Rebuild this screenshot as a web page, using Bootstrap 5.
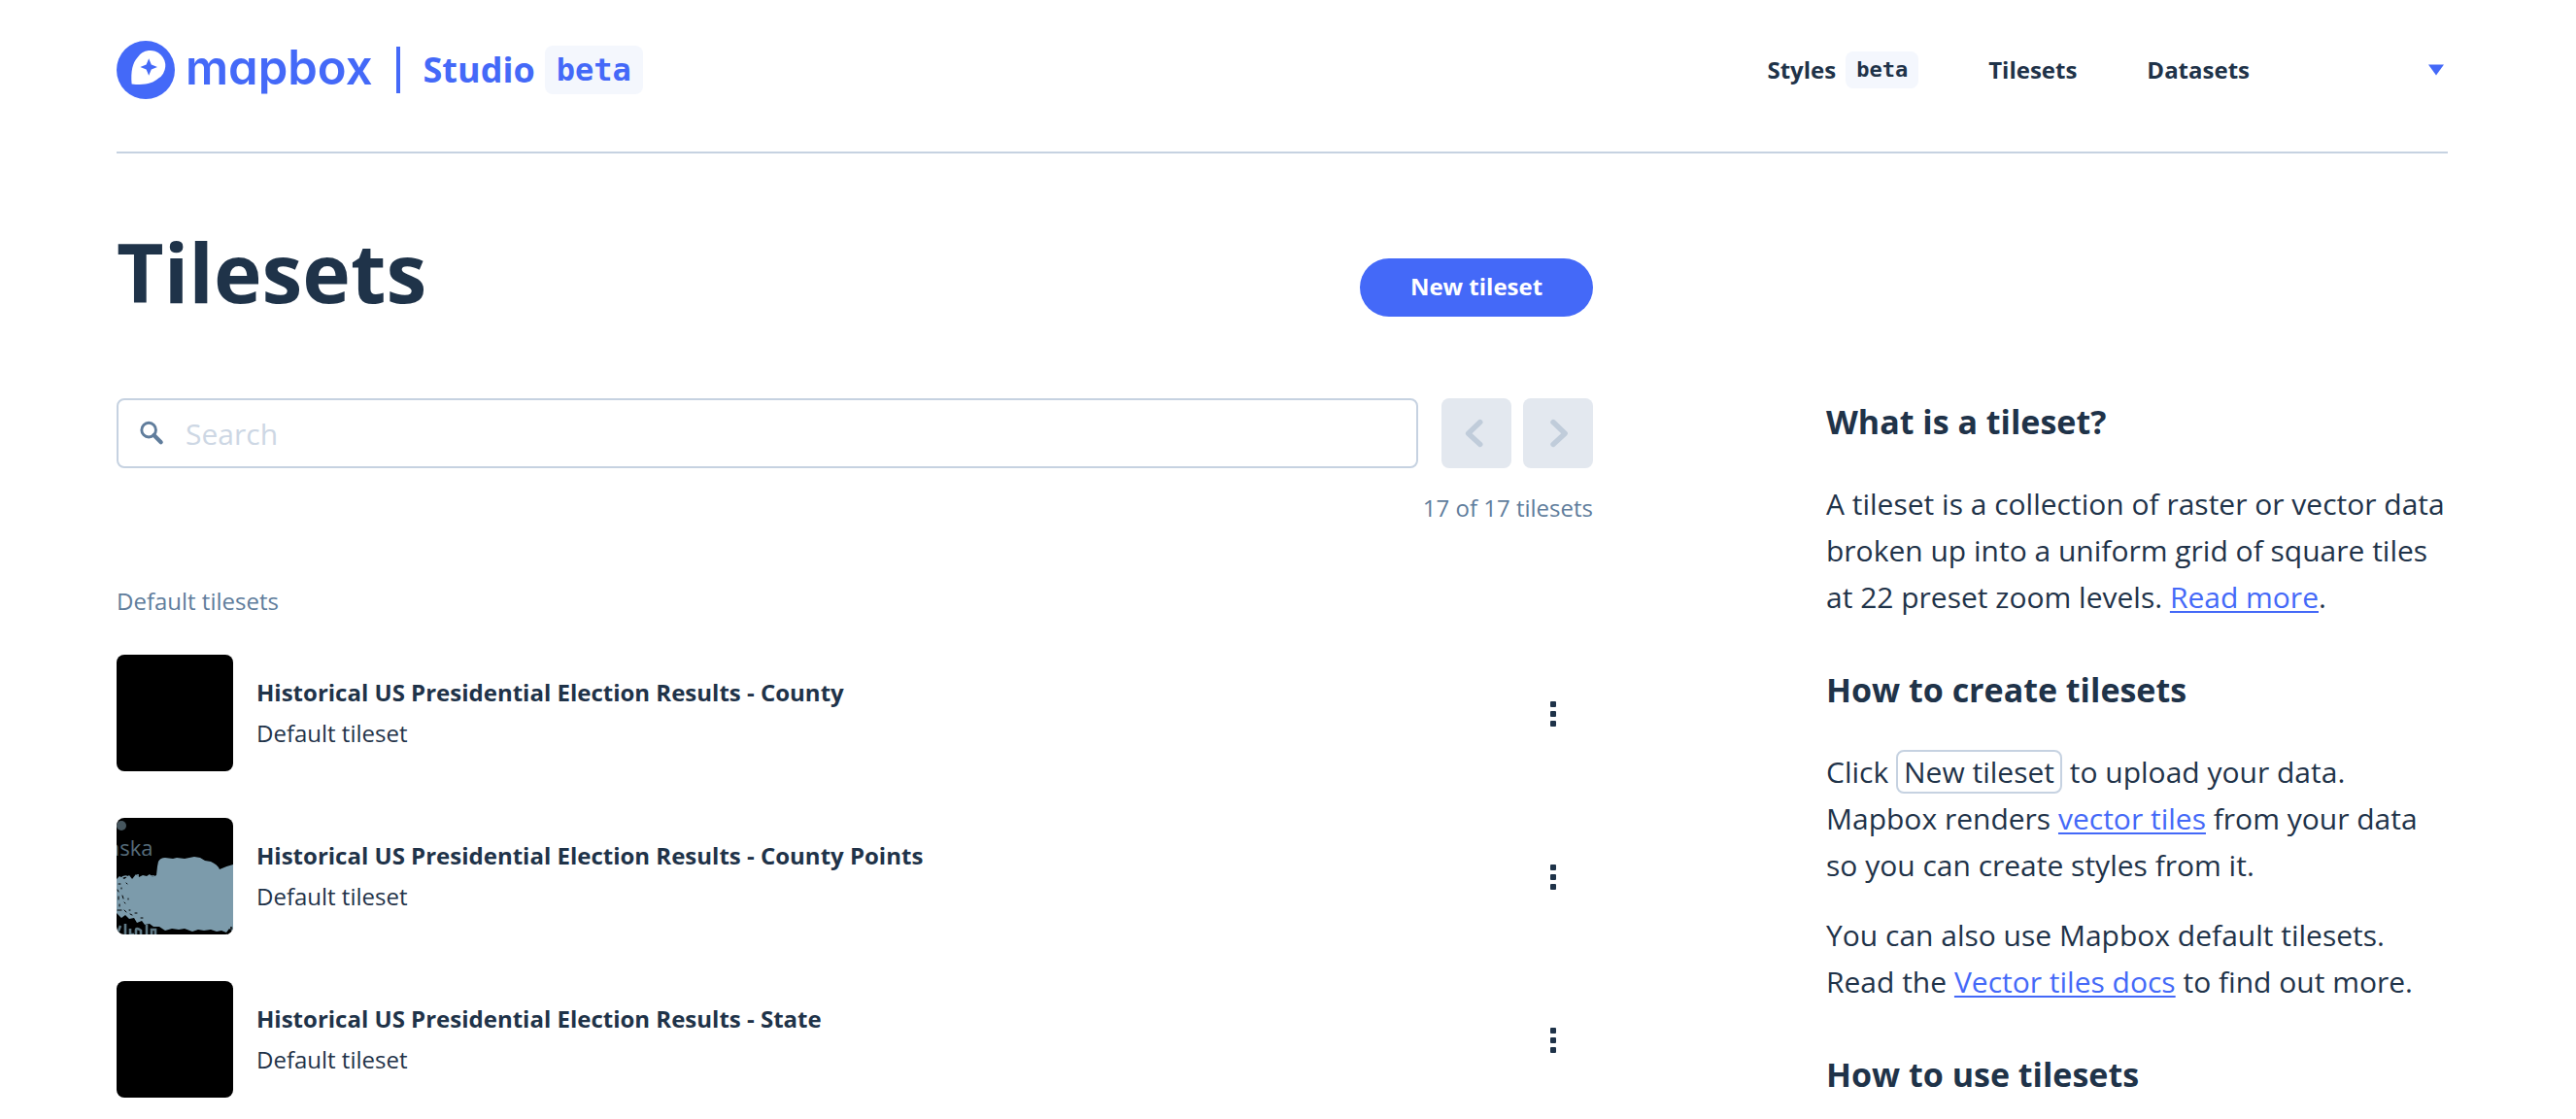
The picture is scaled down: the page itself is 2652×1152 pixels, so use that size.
<!DOCTYPE html>
<html lang="en">
<head>
<meta charset="utf-8">
<meta name="viewport" content="width=device-width, initial-scale=1">
<title>Tilesets | Mapbox Studio</title>
<link href="https://cdn.jsdelivr.net/npm/bootstrap@5.3.0/dist/css/bootstrap.min.css" rel="stylesheet">
<style>
  :root { --ink: #1f3349; --blue: #4469f8; --line: #c6d2e1; --muted: #607d9c; --tint: #f4f7fd; }
  body { font: 400 24px/36px "Open Sans", "Noto Sans", sans-serif; color: var(--ink); background: #fff; }
  a { color: inherit; text-decoration: none; }
  .page-wrap { padding: 0 132px 0 120px; }
  .site-head { height: 158px; border-bottom: 2px solid var(--line); padding-bottom: 12px; }
  .brand-link { color: var(--blue); }
  .wordmark { font: 600 49px/60px Inter, sans-serif; font-feature-settings: "cv11"; margin-left: 11px; padding-bottom: 4px; }
  .brand-rule { width: 4px; height: 48px; background: var(--blue); margin: 0 24px; }
  .product { font-size: 36px; line-height: 50px; font-weight: 700; }
  .beta-tag { font: 700 32px/50px "DejaVu Sans Mono", monospace; background: var(--tint); border-radius: 8px; padding: 0 12px; margin-left: 10px; }
  .site-nav { gap: 72px; font-weight: 700; }
  .site-nav .beta-tag { font-size: 22px; line-height: 38px; padding: 0 11px; }
  .menu-toggle { border: 0; background: none; padding: 0 4px 0 112px; line-height: 0; }
  .main-col { flex: 1 1 0; min-width: 0; }
  .side-col { width: 26.6667%; font-size: 30px; line-height: 48px; padding-top: 252px; }
  .columns { gap: 240px; }
  .page-title { font-size: 84px; line-height: 96px; font-weight: 700; margin: 0; }
  .title-bar { padding: 74px 0 82px; }
  .new-btn { width: 240px; height: 60px; border-radius: 30px; background: var(--blue); color: #fff; font-size: 24px; font-weight: 700; border: 0; padding: 0 0 2px; margin-top: 34px; }
  .search-box { border: 2px solid var(--line); border-radius: 8px; height: 72px; padding: 0 22px; gap: 22px; }
  .search-box input { border: 0; outline: 0; background: none; padding: 2px 0 0; width: 100%; font-size: 30px; line-height: 48px; color: var(--ink); }
  .search-box input::placeholder { color: #cdd7e4; opacity: 1; }
  .pager { gap: 12px; }
  .page-btn { width: 72px; height: 72px; border: 0; border-radius: 8px; background: #e3e8ef; padding: 0; line-height: 0; }
  .quiet { color: var(--muted); }
  .result-count { margin-top: 23px; }
  .group-label { font-size: 24px; line-height: 36px; font-weight: 400; margin: 60px 0 37px; }
  .tiles { gap: 48px; }
  .thumb { width: 120px; height: 120px; border-radius: 8px; background: #000; overflow: hidden; flex: none; }
  .thumb svg { display: block; }
  .row-text { gap: 6px; margin-left: 24px; }
  .dots-btn { border: 0; background: none; padding: 2px 0 0; width: 36px; height: 60px; margin-right: 23px; line-height: 0; }
  .side-col h2 { font-size: 34px; line-height: 48px; font-weight: 700; margin: 0 0 37px; }
  .side-col p { margin: 0 0 24px; }
  .side-col p.last-par { margin-bottom: 47px; }
  .side-col p a { color: var(--blue); text-decoration: underline; text-decoration-thickness: 2px; text-underline-offset: 3px; }
  .key-label { border: 2px solid var(--line); border-radius: 8px; padding: 0 6px; }
</style>
</head>
<body>
<div class="page-wrap">
  <header class="site-head d-flex align-items-center justify-content-between">
    <a href="#" class="brand-link d-flex align-items-center">
      <svg width="60" height="60" viewBox="0 0 60 60" aria-hidden="true">
        <circle cx="30" cy="30" r="30" fill="#4469f8"/>
        <path d="M15.6 44.5C14.6 31 16.4 23 21.5 17.2A15.6 15.6 0 1 1 43.2 38.6C37 44.2 29 46 15.6 44.5Z" fill="#fff"/>
        <path d="M33.2 18.2L35.8 24.4L42 27L35.8 29.6L33.2 35.8L30.6 29.6L24.4 27L30.6 24.4Z" fill="#4469f8"/>
      </svg>
      <span class="wordmark">mapbox</span>
      <span class="brand-rule"></span>
      <span class="product">Studio</span>
      <span class="beta-tag">beta</span>
    </a>
    <nav class="site-nav d-flex align-items-center">
      <a href="#" class="d-flex align-items-center">Styles<span class="beta-tag">beta</span></a>
      <a href="#">Tilesets</a>
      <a href="#">Datasets</a>
      <button class="menu-toggle" type="button" aria-label="Account menu">
        <svg width="16" height="12" viewBox="0 0 16 12"><path d="M0 .5H16L8 11.5Z" fill="#4469f8"/></svg>
      </button>
    </nav>
  </header>

  <div class="columns d-flex">
    <main class="main-col">
      <div class="title-bar d-flex align-items-start justify-content-between">
        <h1 class="page-title">Tilesets</h1>
        <button class="new-btn" type="button">New tileset</button>
      </div>

      <div class="d-flex">
        <label class="search-box d-flex align-items-center flex-grow-1 me-4">
          <svg width="26" height="26" viewBox="0 0 26 26" fill="none" stroke="#607d9c" aria-hidden="true"><circle cx="9.5" cy="9.5" r="7.6" stroke-width="3"/><path d="M15 15L22.5 22.5" stroke-width="4.4" stroke-linecap="round"/></svg>
          <input type="text" placeholder="Search" aria-label="Search tilesets">
        </label>
        <div class="pager d-flex">
          <button class="page-btn" type="button" aria-label="Previous page"><svg width="72" height="72" viewBox="0 0 72 72" fill="none" stroke="#c0ccda" stroke-width="5.4" stroke-linecap="round" stroke-linejoin="round"><path d="M39.8 24.5L27.6 36.2L39.8 47.5"/></svg></button>
          <button class="page-btn" type="button" aria-label="Next page"><svg width="72" height="72" viewBox="0 0 72 72" fill="none" stroke="#c0ccda" stroke-width="5.4" stroke-linecap="round" stroke-linejoin="round"><path d="M31 24.5L43.2 36.2L31 47.5"/></svg></button>
        </div>
      </div>
      <div class="result-count quiet text-end">17 of 17 tilesets</div>

      <h2 class="group-label quiet">Default tilesets</h2>
      <ul class="tiles list-unstyled d-flex flex-column m-0">
        <li class="d-flex align-items-center">
          <div class="thumb"></div>
          <div class="row-text d-flex flex-column flex-grow-1"><a href="#" class="fw-bold">Historical US Presidential Election Results - County</a><span>Default tileset</span></div>
          <button class="dots-btn" type="button" aria-label="Options"><svg width="6" height="26" viewBox="0 0 6 26" fill="#1f3349"><rect width="6" height="6" rx="1"/><rect y="10" width="6" height="6" rx="1"/><rect y="20" width="6" height="6" rx="1"/></svg></button>
        </li>
        <li class="d-flex align-items-center">
          <div class="thumb">
            <svg width="120" height="120" viewBox="0 0 120 120" aria-hidden="true">
              <circle cx="5" cy="8" r="5" fill="#46565e"/>
              <text x="-9" y="39" font-family="Open Sans, sans-serif" font-size="22" fill="#566c7a">aska</text>
              <path d="M0 63L3 60L8 63L13 59L16 63L20 58L23 61L27 59L31 60L34 58L37 61L41 59L42 50L43 45Q45 41 50 41L58 42L62 41L70 42L80 40L86 41L91 44L97 45Q104 48 106 53Q112 50 120 48V117L116 114L113 118L108 116L103 117L97 115L90 116L84 115L78 117L70 114L64 115L57 114L50 116L44 112L38 112L34 109L29 110L26 106L21 108L18 103L13 104L9 100L5 103L0 98Z" fill="#7c9bab"/>
              <path d="M4 63q5-6 11 0M22 64v-6M33 60h6" stroke="#7c9bab" stroke-width="1.6" fill="none"/>
              <g stroke="#000" stroke-width="1" stroke-linecap="round"><path d="M2 68h2M1 74l1 2M5 72v1M10 67l1 1M2 81v3M6 80l1 3M3 89v2M8 87l1 1M1 95h4M8 95l2 2M14 99l2 1M12 83v1M13 95h1M19 98h2M25 103h2"/></g>
              <g stroke="#5f7985" stroke-width="2.6" fill="none"><path d="M1 119l3-8M9 109v11M14 114v6h4M25 120v-4q-5-4-5 0v4M31 110v10M36 120v-5h4v5"/></g>
              <path d="M108 119h3M114 120l2-2M118 112v3" stroke="#000" stroke-width="1.4"/>
            </svg>
          </div>
          <div class="row-text d-flex flex-column flex-grow-1"><a href="#" class="fw-bold">Historical US Presidential Election Results - County Points</a><span>Default tileset</span></div>
          <button class="dots-btn" type="button" aria-label="Options"><svg width="6" height="26" viewBox="0 0 6 26" fill="#1f3349"><rect width="6" height="6" rx="1"/><rect y="10" width="6" height="6" rx="1"/><rect y="20" width="6" height="6" rx="1"/></svg></button>
        </li>
        <li class="d-flex align-items-center">
          <div class="thumb"></div>
          <div class="row-text d-flex flex-column flex-grow-1"><a href="#" class="fw-bold">Historical US Presidential Election Results - State</a><span>Default tileset</span></div>
          <button class="dots-btn" type="button" aria-label="Options"><svg width="6" height="26" viewBox="0 0 6 26" fill="#1f3349"><rect width="6" height="6" rx="1"/><rect y="10" width="6" height="6" rx="1"/><rect y="20" width="6" height="6" rx="1"/></svg></button>
        </li>
      </ul>
    </main>

    <aside class="side-col flex-shrink-0">
      <h2>What is a tileset?</h2>
      <p class="last-par">A tileset is a collection of raster or vector data broken up into a uniform grid of square tiles at 22 preset zoom levels. <a href="#">Read more</a>.</p>
      <h2>How to create tilesets</h2>
      <p>Click <span class="key-label">New tileset</span> to upload your data. Mapbox renders <a href="#">vector tiles</a> from your data so you can create styles from it.</p>
      <p class="last-par">You can also use Mapbox default tilesets. Read the <a href="#">Vector tiles docs</a> to find out more.</p>
      <h2 class="mb-0">How to use tilesets</h2>
    </aside>
  </div>
</div>
<script src="https://cdn.jsdelivr.net/npm/bootstrap@5.3.0/dist/js/bootstrap.bundle.min.js"></script>
</body>
</html>
